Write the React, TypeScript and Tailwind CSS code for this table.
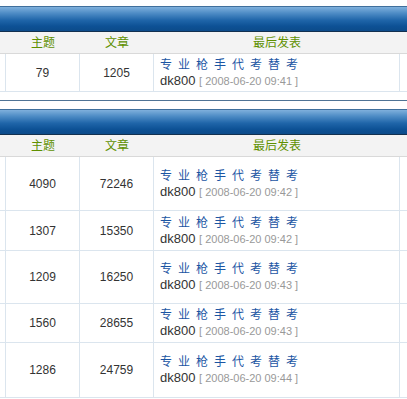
import React from "react";

const font = { fontFamily: '"Liberation Sans", "Noto Sans CJK SC", sans-serif' };

type Row = { t: string; p: string; time: string; h: string };

function Bar() {
  return (
    <div className="h-[26px] border-t border-b border-t-[#3f6f9c] border-b-[#12304f] bg-[linear-gradient(to_bottom,#7fb0dc_0%,#4f8dc6_25%,#1f65a9_55%,#0d5195_80%,#0c4b8a_100%)]" />
  );
}

function Header() {
  return (
    <div className="flex h-[22px] items-center border-b border-[#d9d9d9] bg-[#f3f3f3] text-[12px] text-[#5f9000]">
      <div className="w-[6px]" />
      <div className="w-[74px] text-center">主题</div>
      <div className="w-[74px] text-center">文章</div>
      <div className="w-[246px] text-center">最后发表</div>
      <div className="flex-1" />
    </div>
  );
}

function DataRow({ r }: { r: Row }) {
  return (
    <div className={`flex border-b border-[#dbe5ee] ${r.h}`}>
      <div className="w-[6px] border-r border-[#dbe5ee]" />
      <div className="flex w-[74px] items-center justify-center border-r border-[#dbe5ee] text-[12px] text-[#333]">
        {r.t}
      </div>
      <div className="flex w-[74px] items-center justify-center border-r border-[#dbe5ee] text-[12px] text-[#333]">
        {r.p}
      </div>
      <div className="flex w-[246px] flex-col justify-center border-r border-[#dbe5ee] pl-[6px]">
        <div className="text-[12px] leading-[16px] tracking-[6px] text-[#1b55a3]">专业枪手代考替考</div>
        <div className="text-[13px] leading-[16px] text-[#333]">
          dk800 <span className="text-[11px] text-[#999]">[ 2008-06-20 {r.time} ]</span>
        </div>
      </div>
      <div className="flex-1" />
    </div>
  );
}

export default function App() {
  const rows: Row[] = [
    { t: "4090", p: "72246", time: "09:42", h: "h-[54px]" },
    { t: "1307", p: "15350", time: "09:42", h: "h-[40px]" },
    { t: "1209", p: "16250", time: "09:43", h: "h-[53px]" },
    { t: "1560", p: "28655", time: "09:43", h: "h-[39px]" },
    { t: "1286", p: "24759", time: "09:44", h: "h-[55px]" },
  ];
  return (
    <div className="h-[399px] w-[407px] overflow-hidden bg-white" style={font}>
      <div className="h-[6px]" />
      <Bar />
      <Header />
      <DataRow r={{ t: "79", p: "1205", time: "09:41", h: "h-[38px]" }} />
      <div className="h-[8px]" />
      <div className="h-px bg-[#4f7395]" />
      <div className="h-[8px]" />
      <Bar />
      <Header />
      {rows.map((r, i) => (
        <DataRow key={i} r={r} />
      ))}
    </div>
  );
}
